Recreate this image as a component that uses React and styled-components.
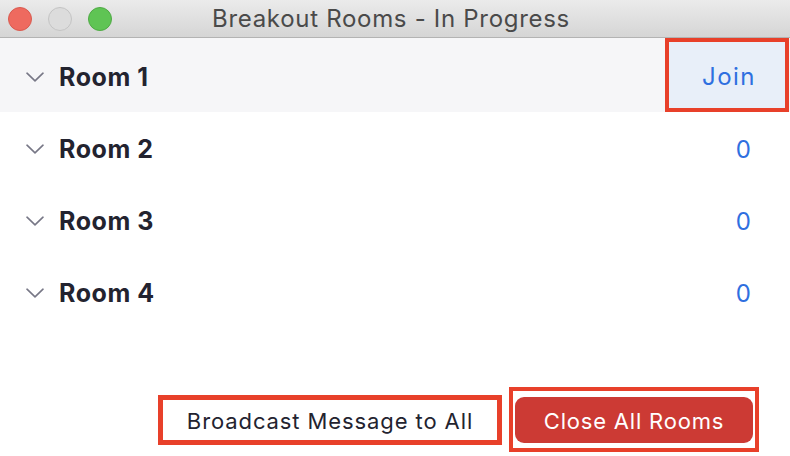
import React from "react";
import styled, { createGlobalStyle } from "styled-components";

const Global = createGlobalStyle`
  html, body { margin: 0; padding: 0; background: #ffffff; }
  body { width: 790px; height: 456px; overflow: hidden; font-family: Inter, "Noto Sans", sans-serif; }
`;

const Window = styled.div`
  width: 790px;
  height: 456px;
  display: flex;
  flex-direction: column;
  background: #ffffff;
`;

const TitleBar = styled.div`
  height: 37px;
  flex: none;
  display: flex;
  align-items: center;
  position: relative;
  background: linear-gradient(#ebebeb, #d5d5d5);
  border-bottom: 1px solid #b3b3b3;
`;

const Lights = styled.div`
  display: flex;
  gap: 16px;
  padding-left: 8px;
`;

const Light = styled.span`
  width: 24px;
  height: 24px;
  border-radius: 50%;
  box-sizing: border-box;
  background: ${(p) => p.$bg};
  border: 1px solid ${(p) => p.$edge};
`;

const Title = styled.div`
  position: absolute;
  left: 0;
  right: 8px;
  top: 0;
  bottom: 0;
  display: flex;
  align-items: center;
  justify-content: center;
  font-size: 24px;
  color: #4a4a4a;
  letter-spacing: 0.7px;
  pointer-events: none;
`;

const List = styled.div`
  display: flex;
  flex-direction: column;
`;

const Row = styled.div`
  height: ${(p) => (p.$active ? 74 : 72)}px;
  display: flex;
  align-items: center;
  justify-content: space-between;
  background: ${(p) => (p.$active ? "#f6f6f8" : "#ffffff")};
  padding-right: ${(p) => (p.$active ? 1 : 39)}px;
`;

const RoomName = styled.div`
  display: flex;
  align-items: center;
  padding-left: 26px;
  gap: 15px;
  font-size: 25px;
  letter-spacing: 0.55px;
  font-weight: 700;
  color: #23232f;
  padding-top: ${(p) => (p.$active ? 4 : 2)}px;
`;

const Count = styled.div`
  font-size: 24px;
  color: #2f6fe0;
  padding-top: 2px;
`;

const JoinBox = styled.div`
  width: 124px;
  height: 74px;
  box-sizing: border-box;
  border: 4px solid #e8402a;
  background: #e8eff9;
  display: flex;
  align-items: center;
  justify-content: center;
  font-size: 24px;
  letter-spacing: 1.5px;
  color: #2f6fe0;
  padding-top: 2px;
  padding-left: 4px;
`;

const Footer = styled.div`
  display: flex;
  justify-content: flex-end;
  align-items: center;
  gap: 7px;
  padding-top: 59px;
  padding-right: 31px;
`;

const BroadcastButton = styled.div`
  width: 344px;
  height: 50px;
  box-sizing: border-box;
  border: 5px solid #e8402a;
  background: #ffffff;
  display: flex;
  align-items: center;
  justify-content: center;
  font-size: 22px;
  letter-spacing: 0.9px;
  color: #23232f;
  padding-top: 2px;
`;

const Highlight = styled.div`
  width: 250px;
  height: 65px;
  box-sizing: border-box;
  border: 4px solid #e8402a;
  padding: 6px 2px 5px 2px;
  display: flex;
`;

const CloseButton = styled.div`
  flex: 1;
  border-radius: 9px;
  background: #cc3a34;
  color: #ffffff;
  display: flex;
  align-items: center;
  justify-content: center;
  font-size: 22px;
  letter-spacing: 0.8px;
  padding-top: 2px;
`;

const Chevron = () => (
  <svg width="18" height="10" viewBox="0 0 18 10" fill="none">
    <path d="M1 1.2 L9 8.8 L17 1.2" stroke="#777786" strokeWidth="1.6" strokeLinecap="round" strokeLinejoin="round" />
  </svg>
);

const rooms = [
  { name: "Room 1", active: true },
  { name: "Room 2", count: 0 },
  { name: "Room 3", count: 0 },
  { name: "Room 4", count: 0 },
];

export default function App() {
  return (
    <>
      <Global />
      <Window>
        <TitleBar>
          <Lights>
            <Light $bg="#ee6a5f" $edge="#d95a4f" />
            <Light $bg="#dcdcdc" $edge="#c4c4c4" />
            <Light $bg="#5fc454" $edge="#4faa45" />
          </Lights>
          <Title>Breakout Rooms - In Progress</Title>
        </TitleBar>
        <List>
          {rooms.map((r) => (
            <Row key={r.name} $active={r.active}>
              <RoomName $active={r.active}>
                <Chevron />
                {r.name}
              </RoomName>
              {r.active ? <JoinBox>Join</JoinBox> : <Count>{r.count}</Count>}
            </Row>
          ))}
        </List>
        <Footer>
          <BroadcastButton>Broadcast Message to All</BroadcastButton>
          <Highlight>
            <CloseButton>Close All Rooms</CloseButton>
          </Highlight>
        </Footer>
      </Window>
    </>
  );
}
